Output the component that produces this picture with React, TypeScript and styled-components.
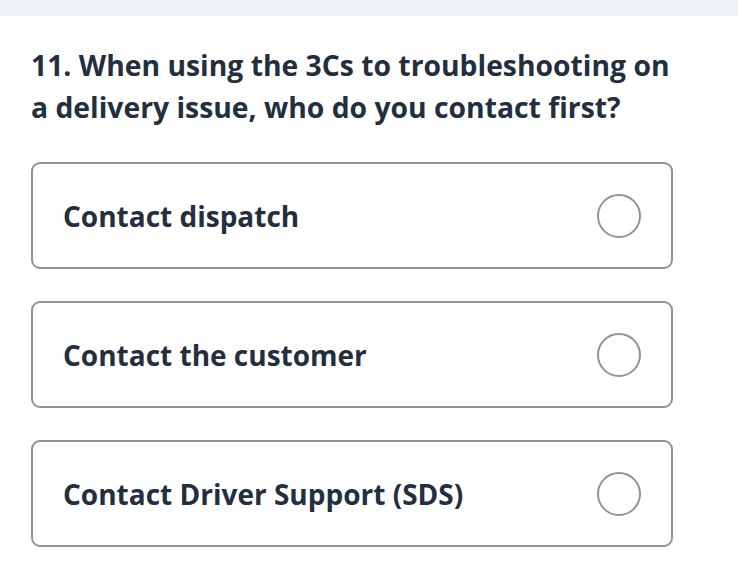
import styled, { createGlobalStyle } from "styled-components";

const GlobalStyle = createGlobalStyle`
  body {
    margin: 0;
    background: #ffffff;
    font-family: "Open Sans", "Noto Sans", sans-serif;
  }
`;

const TopBar = styled.div`
  height: 16px;
  background: #eef2f5;
`;

const Page = styled.div`
  padding: 28px 65px 0 31px;
`;

const Question = styled.h1`
  margin: 0 0 34px;
  font-size: 28.3px;
  line-height: 42px;
  font-weight: 700;
  color: #232f3e;
`;

const Options = styled.div`
  display: flex;
  flex-direction: column;
  gap: 32px;
`;

const Option = styled.label`
  display: flex;
  align-items: center;
  justify-content: space-between;
  height: 107px;
  box-sizing: border-box;
  padding: 0 30px 0 30px;
  border: 2px solid #8d939b;
  border-radius: 9px;
  cursor: pointer;
`;

const OptionText = styled.span`
  font-size: 28px;
  font-weight: 700;
  color: #232f3e;
`;

const Radio = styled.span`
  width: 44px;
  height: 44px;
  box-sizing: border-box;
  border: 2px solid #8d939b;
  border-radius: 50%;
`;

const answers = [
  "Contact dispatch",
  "Contact the customer",
  "Contact Driver Support (SDS)",
];

export default function App() {
  return (
    <>
      <GlobalStyle />
      <TopBar />
      <Page>
        <Question>
          11. When using the 3Cs to troubleshooting on a delivery issue, who do
          you contact first?
        </Question>
        <Options>
          {answers.map((a) => (
            <Option key={a}>
              <OptionText>{a}</OptionText>
              <Radio />
            </Option>
          ))}
        </Options>
      </Page>
    </>
  );
}
